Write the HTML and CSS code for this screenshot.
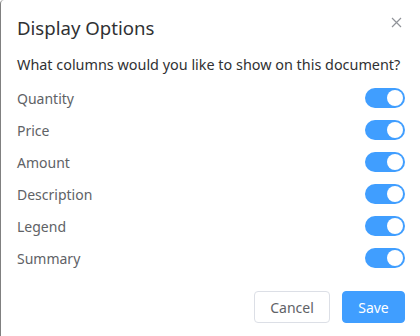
FILE: index.html
```html
<!DOCTYPE html>
<html>
<head>
<meta charset="utf-8">
<link rel="stylesheet" href="styles.css">
</head>
<body>
<div class="dialog">
  <div class="header">
    <span class="title">Display Options</span>
    <button class="close" aria-label="Close">
      <svg width="11" height="11" viewBox="0 0 11 11"><path d="M1 1L10 10M10 1L1 10" stroke="#909399" stroke-width="1.2" fill="none"/></svg>
    </button>
  </div>
  <div class="body">
    <p class="question">What columns would you like to show on this document?</p>
    <div class="row"><span class="label">Quantity</span><span class="switch"><span class="knob"></span></span></div>
    <div class="row"><span class="label">Price</span><span class="switch"><span class="knob"></span></span></div>
    <div class="row"><span class="label">Amount</span><span class="switch"><span class="knob"></span></span></div>
    <div class="row"><span class="label">Description</span><span class="switch"><span class="knob"></span></span></div>
    <div class="row"><span class="label">Legend</span><span class="switch"><span class="knob"></span></span></div>
    <div class="row"><span class="label">Summary</span><span class="switch"><span class="knob"></span></span></div>
  </div>
  <div class="footer">
    <button class="btn btn-default">Cancel</button>
    <button class="btn btn-primary">Save</button>
  </div>
</div>
</body>
</html>
```
FILE: styles.css
```css
html, body {
  margin: 0;
  padding: 0;
  background: #fff;
}
body {
  font-family: "Noto Sans", "Open Sans", sans-serif;
  width: 420px;
  height: 336px;
  overflow: hidden;
}
.dialog {
  box-sizing: border-box;
  width: 420px;
  height: 336px;
  border-left: 1px solid #808080;
  border-top-left-radius: 4px;
  padding: 0 15px 0 16px;
  background: #fff;
}
.header {
  display: flex;
  justify-content: space-between;
  align-items: flex-start;
  padding-top: 14px;
}
.title {
  font-size: 18.6px;
  line-height: 28px;
  color: #303133;
}
.close {
  border: 0;
  background: none;
  padding: 0;
  margin: 3px 3px 0 0;
  width: 11px;
  height: 11px;
  display: flex;
}
.body {
  padding-top: 13px;
}
.question {
  margin: 0 0 7px;
  font-size: 14.4px;
  line-height: 20px;
  color: #303133;
}
.row {
  display: flex;
  justify-content: space-between;
  align-items: center;
  height: 32px;
}
.label {
  font-size: 14px;
  color: #606266;
}
.switch {
  width: 40px;
  height: 20px;
  border-radius: 10px;
  background: #409eff;
  display: flex;
  align-items: center;
  justify-content: flex-end;
  padding: 0 2px;
  box-sizing: border-box;
}
.knob {
  width: 16px;
  height: 16px;
  border-radius: 50%;
  background: #fff;
}
.footer {
  display: flex;
  justify-content: flex-end;
  gap: 12px;
  padding-top: 17px;
}
.btn {
  font-family: inherit;
  font-size: 14px;
  height: 32px;
  border-radius: 4px;
  padding: 0;
  cursor: pointer;
}
.btn-default {
  width: 76px;
  background: #fff;
  border: 1px solid #dcdfe6;
  color: #606266;
}
.btn-primary {
  width: 63px;
  background: #409eff;
  border: 1px solid #409eff;
  color: #fff;
}
```
